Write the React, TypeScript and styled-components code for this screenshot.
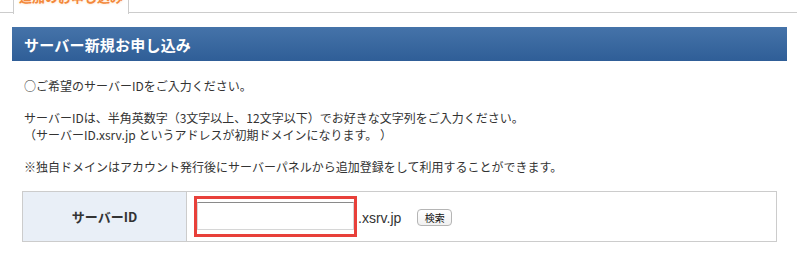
import React from "react";
import styled, { createGlobalStyle } from "styled-components";

const GlobalStyle = createGlobalStyle`
  body {
    margin: 0;
    background: #fff;
    font-family: "Noto Sans CJK JP", "Liberation Sans", sans-serif;
    color: #333;
  }
`;

const Page = styled.div`
  width: 801px;
  height: 269px;
  overflow: hidden;
`;

const TabBar = styled.div`
  height: 13px;
  border-bottom: 1px solid #cccccc;
  width: 797px;
  display: flex;
  padding-left: 13px;
  box-sizing: border-box;
`;

const Tab = styled.div`
  width: 116px;
  height: 14px;
  box-sizing: border-box;
  border-left: 1px solid #cccccc;
  border-right: 1px solid #cccccc;
  background: #fff;
  overflow: hidden;
  display: flex;
  justify-content: center;
`;

const TabLabel = styled.span`
  margin-top: -12px;
  font-size: 13px;
  font-weight: bold;
  line-height: 18px;
  color: #f3883a;
  text-shadow: 0 0 3px #ffd9b8;
`;

const Section = styled.section`
  padding: 14px 0 0 12px;
`;

const Heading = styled.h2`
  margin: 0;
  width: 775px;
  height: 34px;
  box-sizing: border-box;
  padding-left: 12px;
  display: flex;
  align-items: center;
  background: linear-gradient(#4573a9, #2f5e97);
  color: #fff;
  font-size: 15px;
  font-weight: bold;
  letter-spacing: 0.2px;
`;

const Body = styled.div`
  padding: 16px 0 0 12px;
  font-size: 12px;
  line-height: 17px;
`;

const Para = styled.p<{ $gap?: number }>`
  margin: 0 0 ${(p) => p.$gap ?? 15}px 0;
`;

const FormTable = styled.table`
  border-collapse: collapse;
  width: 755px;
  margin: 16px 0 0 10px;
`;

const LabelCell = styled.th`
  width: 163px;
  height: 49px;
  padding: 0;
  border: 1px solid #cccccc;
  background: #e9eff7;
  font-size: 13px;
  font-weight: bold;
  color: #333;
  text-align: center;
`;

const FieldCell = styled.td`
  border: 1px solid #cccccc;
  padding: 0 0 0 7px;
`;

const FieldRow = styled.div`
  display: flex;
  align-items: center;
`;

const Highlight = styled.div`
  border: 3px solid #e8403a;
  padding: 3px 0 4px 0;
  width: 157px;
`;

const TextInput = styled.input`
  display: block;
  width: 157px;
  height: 28px;
  box-sizing: border-box;
  border: 1px solid #d6d6d6;
  border-top: 1px solid #8a8a8a;
  outline: none;
  margin: 0;
  padding: 0 4px;
`;

const Suffix = styled.span`
  font-family: "Liberation Sans", Arial, sans-serif;
  font-size: 14px;
  color: #333;
  margin: 2px 16px 0 1px;
`;

const SearchButton = styled.button`
  height: 17px;
  width: 35px;
  padding: 0;
  border: 1px solid #b5b5b5;
  border-radius: 4px;
  background: linear-gradient(#ffffff, #f1f1f1);
  font-family: "Noto Sans CJK JP", sans-serif;
  font-size: 10px;
  line-height: 14px;
  color: #111;
  margin-top: 2px;
`;

export default function App() {
  return (
    <Page>
      <GlobalStyle />
      <TabBar>
        <Tab>
          <TabLabel>追加のお申し込み</TabLabel>
        </Tab>
      </TabBar>
      <Section>
        <Heading>サーバー新規お申し込み</Heading>
        <Body>
          <Para>○ご希望のサーバーIDをご入力ください。</Para>
          <Para>
            サーバーIDは、半角英数字（3文字以上、12文字以下）でお好きな文字列をご入力ください。
            <br />
            （サーバーID.xsrv.jp というアドレスが初期ドメインになります。 ）
          </Para>
          <Para $gap={0}>
            ※独自ドメインはアカウント発行後にサーバーパネルから追加登録をして利用することができます。
          </Para>
        </Body>
        <FormTable>
          <tbody>
            <tr>
              <LabelCell>サーバーID</LabelCell>
              <FieldCell>
                <FieldRow>
                  <Highlight>
                    <TextInput type="text" />
                  </Highlight>
                  <Suffix>.xsrv.jp</Suffix>
                  <SearchButton>検索</SearchButton>
                </FieldRow>
              </FieldCell>
            </tr>
          </tbody>
        </FormTable>
      </Section>
    </Page>
  );
}
